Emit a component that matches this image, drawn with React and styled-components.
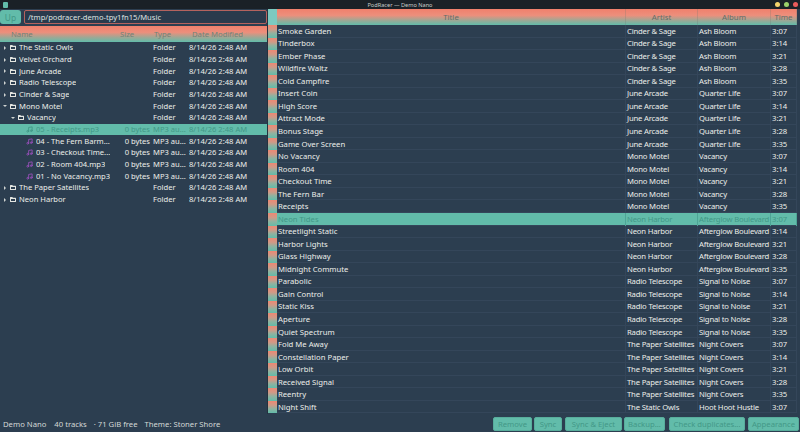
import React from 'react';
import styled, { createGlobalStyle } from 'styled-components';
import { Music } from 'lucide-react';

const Global = createGlobalStyle`
  html, body { margin: 0; padding: 0; width: 800px; height: 432px; overflow: hidden; background: #2c3e50; }
  * { box-sizing: border-box; }
  #root { width: 800px; height: 432px; }
`;

const TEAL = '#62bcaa';
const CORAL = '#f0806c';
const SELTEXT = '#429887';
const HEAD = `linear-gradient(180deg, ${CORAL} 0%, #ec8f7c 40%, #a0a794 70%, ${TEAL} 100%)`;
const CELL = `"Noto Sans", "Lato", sans-serif`;

const Win = styled.div`
  width: 800px; height: 432px; display: flex; flex-direction: column;
  background: #2c3e50; color: #eceeea; font-family: ${CELL}; font-size: 7.7px;
`;
const TitleBar = styled.header`
  height: 9px; flex: none; background: #1a2127; position: relative;
  display: flex; align-items: center; justify-content: center;
  font-size: 5.6px; color: #c9ccc9;
`;
const AppIcon = styled.span`
  position: absolute; left: 3px; top: 2px; width: 5px; height: 6px; border-radius: 1px; background: ${TEAL};
`;
const Lights = styled.div`
  position: absolute; right: 2px; top: 2px; display: flex; gap: 4px;
`;
const Light = styled.span`
  width: 5px; height: 5px; border-radius: 50%; background: ${p => p.$c};
`;
const Main = styled.div`
  flex: 1; min-height: 0; display: flex;
`;
const LeftPane = styled.section`
  width: 267px; flex: none; display: flex; flex-direction: column;
`;
const PathBar = styled.div`
  height: 17px; flex: none; display: flex; gap: 3px; padding: 1px 0 2px 0; align-items: stretch;
`;
const UpBtn = styled.button`
  width: 21px; border: 0; padding: 0; border-radius: 3px; background: ${TEAL};
  color: ${SELTEXT}; font: inherit; font-size: 8.4px;
`;
const PathInput = styled.div`
  flex: 1; border: 1px solid #b4625e; border-radius: 2px; background: #2a3a4c;
  padding: 0 3px; display: flex; align-items: center; font-size: 7.6px; color: #dfe3e0;
`;
const TreeHead = styled.div`
  height: 16px; flex: none; background: ${HEAD}; color: #6f8379; font-size: 7.7px;
  display: grid; grid-template-columns: 120px 34px 38px 1fr; align-items: center;
`;
const HeadLabel = styled.span`
  padding-left: ${p => p.$pl || 0}px;
`;
const Tree = styled.div`
  flex: 1;
`;
const TreeRow = styled.div`
  height: 11.68px; display: grid; grid-template-columns: 122px 30px 37px 1fr; align-items: center;
  white-space: nowrap; font-size: 7.6px; line-height: 11px;
  background: ${p => p.$sel ? TEAL : 'transparent'};
  color: ${p => p.$sel ? SELTEXT : 'inherit'};
`;
const NameCell = styled.div`
  display: flex; align-items: center; padding-left: ${p => p.$depth * 8 + 3}px; overflow: hidden;
`;
const Arrow = styled.span`
  width: 0; height: 0; flex: none; margin-right: ${p => p.$open ? 3 : 4}px;
  ${p => p.$open
    ? 'border-left: 2px solid transparent; border-right: 2px solid transparent; border-top: 2.5px solid #cfd4d2;'
    : 'border-top: 2px solid transparent; border-bottom: 2px solid transparent; border-left: 2.5px solid #cfd4d2; margin-left: 1px;'}
`;
const FolderSvg = styled.svg`
  width: 6px; height: 5px; flex: none; margin-right: 3px;
`;
const FolderGlyph = () => (
  <FolderSvg viewBox="0 0 12 10">
    <path fill="#e4e6e2" fillRule="evenodd" d="M0 1a1 1 0 0 1 1-1h3.5l1.5 1.5h5a1 1 0 0 1 1 1V9a1 1 0 0 1-1 1H1a1 1 0 0 1-1-1zM2 4v4h8V4z" />
  </FolderSvg>
);
const MusicGlyph = styled(Music)`
  width: 7px; height: 7px; flex: none; margin: 0 3px 0 ${p => p.$pad}px; stroke-width: 3;
  color: ${p => p.$sel ? SELTEXT : '#9650b8'};
`;
const Size = styled.span`
  text-align: right; padding-right: 2px; overflow: hidden;
`;
const Clip = styled.span`
  overflow: hidden; text-overflow: clip; white-space: nowrap;
`;
const Cell = styled.span`
  padding-left: ${p => p.$pl || 0}px; overflow: hidden; white-space: nowrap;
`;
const Splitter = styled.div`
  width: 1px; flex: none; background: #24323f;
`;
const RightPane = styled.section`
  flex: 1; min-width: 0; display: flex; flex-direction: column;
`;
const Columns = '9px 349px 72px 73px 26px';
const TrackHead = styled.div`
  height: 16px; flex: none; display: grid; grid-template-columns: ${Columns};
  width: 529px; font-size: 7.8px; color: #5f6f6a; align-items: stretch;
`;
const Corner = styled.div`
  background: #7cc9c0;
`;
const HeadCell = styled.div`
  background: ${HEAD}; display: flex; align-items: center; justify-content: center;
  border-right: 1px solid rgba(110, 120, 110, .25);
`;
const TrackRow = styled.div`
  height: 12.54px; display: grid; grid-template-columns: ${Columns}; width: 529px; align-items: stretch;
  font-size: 7.7px; white-space: nowrap;
  background: ${p => p.$sel ? TEAL : 'transparent'};
  color: ${p => p.$sel ? SELTEXT : 'inherit'};
  box-shadow: inset 0 -1px 0 #34465a;
`;
const Gutter = styled.div`
  background: linear-gradient(180deg, #ee8873 0%, #cf9a87 35%, #8fb2a0 65%, ${TEAL} 100%);
`;
const TrackCell = styled.div`
  padding: 0 0 1px 1px; display: flex; align-items: center; overflow: hidden;
  letter-spacing: ${p => p.$tight ? '-0.18px' : '0'};
  border-right: 1px solid ${p => p.$sel ? '#4ea596' : '#34465a'};
`;
const Status = styled.footer`
  height: 18px; flex: none; margin-top: auto; display: flex; align-items: center; padding: 2px 1px 0 3px;
  font-size: 7.7px; color: #d3d8d6;
`;
const StatusText = styled.span`
  margin-right: ${p => p.$mr}px; white-space: nowrap;
`;
const Spacer = styled.div`flex: 1;`;
const Btn = styled.button`
  height: 14px; width: ${p => p.$w}px; margin-left: ${p => p.$ml || 0}px; padding: 0; border: 1px solid #58ad9c; border-radius: 2px; background: ${TEAL};
  color: ${SELTEXT}; font: inherit; font-size: 7.7px; white-space: nowrap;
`;

const D = '8/14/26 2:48 AM';
const top1 = ['The Static Owls', 'Velvet Orchard', 'June Arcade', 'Radio Telescope', 'Cinder & Sage'];
const files = [
  ['05 - Receipts.mp3', true], ['04 - The Fern Barm...'], ['03 - Checkout Time...'], ['02 - Room 404.mp3'], ['01 - No Vacancy.mp3'],
];
const group = (artist, album, titles, times = ['3:07', '3:14', '3:21', '3:28', '3:35']) =>
  titles.map((t, i) => ({ t, artist, album, time: times[i] }));
const tracks = [
  ...group('Cinder & Sage', 'Ash Bloom', ['Smoke Garden', 'Tinderbox', 'Ember Phase', 'Wildfire Waltz', 'Cold Campfire']),
  ...group('June Arcade', 'Quarter Life', ['Insert Coin', 'High Score', 'Attract Mode', 'Bonus Stage', 'Game Over Screen']),
  ...group('Mono Motel', 'Vacancy', ['No Vacancy', 'Room 404', 'Checkout Time', 'The Fern Bar', 'Receipts']),
  ...group('Neon Harbor', 'Afterglow Boulevard', ['Neon Tides', 'Streetlight Static', 'Harbor Lights', 'Glass Highway', 'Midnight Commute']),
  ...group('Radio Telescope', 'Signal to Noise', ['Parabolic', 'Gain Control', 'Static Kiss', 'Aperture', 'Quiet Spectrum']),
  ...group('The Paper Satellites', 'Night Covers', ['Fold Me Away', 'Constellation Paper', 'Low Orbit', 'Received Signal', 'Reentry']),
  { t: 'Night Shift', artist: 'The Static Owls', album: 'Hoot Hoot Hustle', time: '3:07' },
];

const FolderRow = ({ name, open, depth = 0 }) => (
  <TreeRow>
    <NameCell $depth={depth}>
      <Arrow $open={open} />
      <FolderGlyph />
      <Clip>{name}</Clip>
    </NameCell>
    <span />
    <Cell $pl={1}>Folder</Cell>
    <Cell>{D}</Cell>
  </TreeRow>
);

export default function App() {
  return (
    <Win>
      <Global />
      <TitleBar>
        <AppIcon />
        PodRacer — Demo Nano
        <Lights>
          <Light $c="#f3d36b" />
          <Light $c="#9bd06a" />
          <Light $c="#ea5b5b" />
        </Lights>
      </TitleBar>
      <Main>
        <LeftPane>
          <PathBar>
            <UpBtn>Up</UpBtn>
            <PathInput>/tmp/podracer-demo-tpy1fn15/Music</PathInput>
          </PathBar>
          <TreeHead>
            <HeadLabel $pl={11}>Name</HeadLabel>
            <span>Size</span>
            <span>Type</span>
            <span>Date Modified</span>
          </TreeHead>
          <Tree>
            {top1.map(n => <FolderRow key={n} name={n} />)}
            <FolderRow name="Mono Motel" open />
            <FolderRow name="Vacancy" open depth={1} />
            {files.map(([n, sel]) => (
              <TreeRow key={n} $sel={sel}>
                <NameCell $depth={2}>
                  <MusicGlyph $pad={7} $sel={sel} />
                  <Clip>{n}</Clip>
                </NameCell>
                <Size>0 bytes</Size>
                <Cell $pl={1}>MP3 au...</Cell>
                <Cell>{D}</Cell>
              </TreeRow>
            ))}
            <FolderRow name="The Paper Satellites" />
            <FolderRow name="Neon Harbor" />
          </Tree>
        </LeftPane>
        <Splitter />
        <RightPane>
          <TrackHead>
            <Corner />
            <HeadCell>Title</HeadCell>
            <HeadCell>Artist</HeadCell>
            <HeadCell>Album</HeadCell>
            <HeadCell>Time</HeadCell>
          </TrackHead>
          {tracks.map(r => {
            const sel = r.t === 'Neon Tides';
            return (
              <TrackRow key={r.t} $sel={sel}>
                <Gutter />
                <TrackCell $sel={sel}>{r.t}</TrackCell>
                <TrackCell $sel={sel} $tight>{r.artist}</TrackCell>
                <TrackCell $sel={sel} $tight>{r.album}</TrackCell>
                <TrackCell $sel={sel}>{r.time}</TrackCell>
              </TrackRow>
            );
          })}
        </RightPane>
      </Main>
      <Status>
        <StatusText $mr={8}>Demo Nano</StatusText>
        <StatusText $mr={7}>40 tracks</StatusText>
        <StatusText $mr={7}>· 71 GiB free</StatusText>
        <StatusText $mr={0}>Theme: Stoner Shore</StatusText>
        <Spacer />
        <Btn $w={39}>Remove</Btn>
        <Btn $w={28} $ml={2}>Sync</Btn>
        <Btn $w={57} $ml={3}>Sync &amp; Eject</Btn>
        <Btn $w={41} $ml={2}>Backup...</Btn>
        <Btn $w={76} $ml={4}>Check duplicates...</Btn>
        <Btn $w={51} $ml={3}>Appearance</Btn>
      </Status>
    </Win>
  );
}
